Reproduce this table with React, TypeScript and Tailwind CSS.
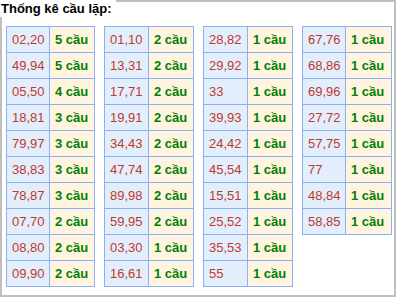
const tables: { a: string; b: string; rows: [string, number][] }[] = [
  {
    a: "w-[43px]",
    b: "w-[45px]",
    rows: [["02,20", 5], ["49,94", 5], ["05,50", 4], ["18,81", 3], ["79,97", 3], ["38,83", 3], ["78,87", 3], ["07,70", 2], ["08,80", 2], ["09,90", 2]],
  },
  {
    a: "w-[44px]",
    b: "w-[45px]",
    rows: [["01,10", 2], ["13,31", 2], ["17,71", 2], ["19,91", 2], ["34,43", 2], ["47,74", 2], ["89,98", 2], ["59,95", 2], ["03,30", 1], ["16,61", 1]],
  },
  {
    a: "w-[44px]",
    b: "w-[45px]",
    rows: [["28,82", 1], ["29,92", 1], ["33", 1], ["39,93", 1], ["24,42", 1], ["45,54", 1], ["15,51", 1], ["25,52", 1], ["35,53", 1], ["55", 1]],
  },
  {
    a: "w-[43px]",
    b: "w-[46px]",
    rows: [["67,76", 1], ["68,86", 1], ["69,96", 1], ["27,72", 1], ["57,75", 1], ["77", 1], ["48,84", 1], ["58,85", 1]],
  },
];

export default function App() {
  return (
    <div className="w-[396px] h-[297px] border-2 border-[#bfbfbf] bg-white font-['Liberation_Sans',Arial,sans-serif] text-[13px]">
      <div className="-mt-[2px] -ml-[2px] w-fit h-[17px] bg-white pl-[1px] pr-[4px] font-bold leading-[17px] text-black">
        Thống kê cầu lặp:
      </div>
      <div className="mt-[9px] flex items-start gap-[9px] pl-[4px]">
        {tables.map((t, i) => (
          <div key={i} className="flex flex-col border-t border-l border-[#8cb0f5]">
            {t.rows.map(([pair, n]) => (
              <div key={pair} className="flex h-[26px]">
                <div className={`${t.a} flex items-center border-r border-b border-[#8cb0f5] bg-[#e3eefd] pl-[5px] text-[#c0392b]`}>
                  {pair}
                </div>
                <div className={`${t.b} flex items-center border-r border-b border-[#8cb0f5] bg-[#fff4e0] pl-[5px] font-bold text-[#008000]`}>
                  {n} cầu
                </div>
              </div>
            ))}
          </div>
        ))}
      </div>
    </div>
  );
}
